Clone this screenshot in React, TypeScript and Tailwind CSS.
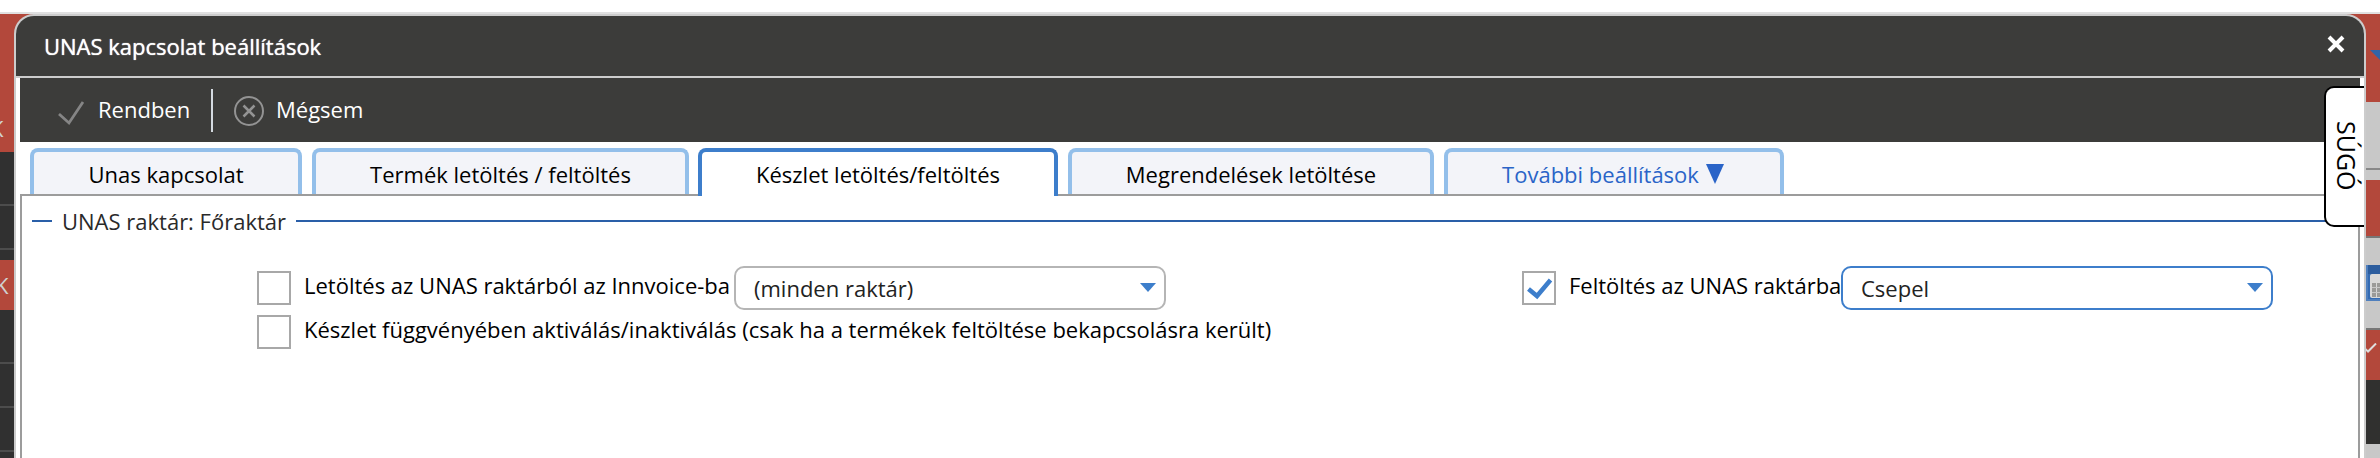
import type { ReactNode } from 'react';

interface TabProps {
  label: ReactNode;
  className: string;
  active?: boolean;
}

function Tab({ label, className, active }: TabProps) {
  return (
    <button
      className={`${className} flex items-start justify-center rounded-t-lg border-x-4 border-t-4 pt-[5px] leading-[35px] ${
        active ? 'h-12 border-[#3d7ecb] bg-white' : 'h-[46px] border-[#93bfea] bg-[#f3f4f9]'
      }`}
    >
      {label}
    </button>
  );
}

function Checkbox({ checked }: { checked?: boolean }) {
  return (
    <span className="flex h-[34px] w-[34px] shrink-0 items-center justify-center border-2 border-[#a8a8a8] bg-white">
      {checked && (
        <svg viewBox="0 0 30 30" className="h-[30px] w-[30px] shrink-0" fill="none" stroke="#3d7ecb" strokeWidth="4.500">
          <path d="M4.500 16L13 23L26.500 7" />
        </svg>
      )}
    </span>
  );
}

function Select({ value, className }: { value: string; className: string }) {
  return (
    <div className={`flex h-11 w-[432px] shrink-0 items-center justify-between rounded-[10px] border-2 bg-white pr-2 text-[#222] ${className}`}>
      <span>{value}</span>
      <svg viewBox="0 0 16 9" className="mb-px h-[9px] w-4" fill="#3d7ecb">
        <path d="M0 0H16L8 9Z" />
      </svg>
    </div>
  );
}

function Label({ children }: { children: ReactNode }) {
  return <span className="block shrink-0 whitespace-nowrap leading-[34px]">{children}</span>;
}

// slice of the main menu that sticks out on the left of the dialog
function LeftMenu() {
  return (
    <div className="flex h-full w-[14px] shrink-0 flex-col overflow-hidden bg-[#303030] text-[22px] text-[#d0d0d0]">
      <div className="h-[138px] shrink-0 bg-[#b3483b] pt-[97px] leading-[34px]">
        <span className="-ml-[10px]">K</span>
      </div>
      <div className="h-[54px] shrink-0 border-b-2 border-[#4c4c4c]" />
      <div className="h-11 shrink-0 border-b-2 border-[#4c4c4c]" />
      <div className="mt-2.5 h-[50px] shrink-0 bg-[#b3483b] leading-[50px]">
        <span className="-ml-[5px]">K</span>
      </div>
      <div className="h-[54px] shrink-0 border-b-2 border-[#4c4c4c]" />
      <div className="h-11 shrink-0 border-b-2 border-[#4c4c4c]" />
      <div className="h-11 shrink-0 border-b-2 border-[#4c4c4c]" />
    </div>
  );
}

function RightMenu() {
  return (
    <div className="flex h-full w-[14px] shrink-0 flex-col overflow-hidden bg-[#c8c8c8]">
      <div className="h-[88px] shrink-0 bg-[#b3483b] pl-1 pt-9">
        <svg viewBox="0 0 10 10" className="h-2.5 w-2.5" fill="#2f64a7">
          <path d="M0 0H10V10Z" />
        </svg>
      </div>
      <div className="h-[68px] shrink-0 border-b-2 border-[#888]" />
      <div className="mt-2.5 h-[56px] shrink-0 bg-[#b3483b]" />
      <div className="h-[94px] shrink-0 border-y-2 border-[#777] pt-[27px]">
        <svg viewBox="0 0 14 36" className="h-9 w-[14px]">
          <rect width="14" height="36" fill="#4f7fbd" />
          <rect x="2" width="12" height="34" fill="#346bb3" />
          <rect x="2" width="12" height="9" fill="#2c5d9e" />
          <rect x="4" y="9" width="12" height="24" rx="2" fill="#d8d8d8" />
          <path d="M6 18h4v14H6zM11 18h3v14h-3z" fill="#9a9a98" />
          <path d="M6 22.500h8M6 27.500h8" stroke="#c8c8c8" />
        </svg>
      </div>
      <div className="h-[50px] shrink-0 bg-[#b3483b] pt-[13px]">
        <svg viewBox="0 0 14 10" className="h-2.5 w-[14px]" fill="none" stroke="#dedede" strokeWidth="2">
          <path d="M-3 4L2 8.500L10 .5" />
        </svg>
      </div>
      <div className="h-16 shrink-0 bg-[#30302f]" />
    </div>
  );
}

export default function App() {
  return (
    <div
      className="flex h-[458px] w-[2380px] flex-col overflow-hidden bg-white text-[22px] text-black"
      style={{ fontFamily: '"Open Sans", "Noto Sans", sans-serif' }}
    >
      <div className="h-[14px] shrink-0 border-b-2 border-[#e0e0e0]" />
      <div className="flex h-[444px] bg-[#b3483b]">
        <LeftMenu />
        <div className="relative h-[480px] w-[2352px] shrink-0 overflow-hidden rounded-t-[20px] border-2 border-[#ccc] bg-white">
          <div className="flex h-[62px] items-center justify-between border-b-2 border-[#ccc] bg-[#3c3c3a] pl-7 pr-[19px] text-white">
            <h1 className="[text-shadow:0_0_1px_#fff]">UNAS kapcsolat beállítások</h1>
            <svg viewBox="0 0 18 18" className="mb-1 h-[18px] w-[18px]" fill="none" stroke="#fff" strokeWidth="4">
              <path d="M2 2L16 16M16 2L2 16" />
            </svg>
          </div>

          <div className="mx-1 flex h-16 items-center bg-[#3c3c3a] text-white">
            <svg viewBox="0 0 28 26" className="ml-[37px] mt-[5px] h-[26px] w-7" fill="none" stroke="#858585" strokeWidth="2.800">
              <path d="M2 14L12 23L26 2" />
            </svg>
            <span className="mb-0.5 ml-[13px] w-[92px]">Rendben</span>
            <span className="ml-[21px] h-[43px] w-0.5 bg-[#d4dae0]" />
            <svg viewBox="0 0 30 30" className="ml-[21px] mt-px h-[30px] w-[30px]" fill="none" stroke="#939393" strokeWidth="2">
              <circle cx="15" cy="15" r="14" />
              <path d="M9.500 9.500L20.500 20.500M20.500 9.500L9.500 20.500" strokeWidth="2.500" />
            </svg>
            <span className="mb-0.5 ml-3">Mégsem</span>
          </div>

          <div className="relative z-10 mt-1.5 flex h-[46px] items-start pl-[10px]">
            <Tab label="Unas kapcsolat" className="ml-1 w-[272px]" />
            <Tab label="Termék letöltés / feltöltés" className="ml-2.5 w-[377px]" />
            <Tab label="Készlet letöltés/feltöltés" className="ml-[9px] w-[360px]" active />
            <Tab label="Megrendelések letöltése" className="ml-2.5 w-[366px]" />
            <Tab
              label={
                <>
                  További beállítások
                  <svg viewBox="0 0 18 20" className="ml-[7px] mt-[7px] h-5 w-[18px]" fill="currentColor">
                    <path d="M0 0H18L9 20Z" />
                  </svg>
                </>
              }
              className="ml-2.5 w-[340px] pr-0.5 text-[#2a64c8]"
            />
          </div>

          <div className="mx-1 h-[300px] border-2 border-[#9c9c9c] pt-[7px]">
            <div className="flex h-9 items-center pl-2.5 pr-2 text-[#2a2a2a]">
              <span className="h-0.5 w-5 bg-[#2a5fa8]" />
              <span className="ml-2.5 w-[234px] whitespace-nowrap">UNAS raktár: Főraktár</span>
              <span className="h-0.5 flex-1 bg-[#2a5fa8]" />
            </div>

            <div className="mt-[27px] flex h-11 items-center pl-[235px]">
              <div className="flex w-[1265px] items-center">
                <Checkbox />
                <div className="ml-[13px] w-[430px] pb-1.5">
                  <Label>Letöltés az UNAS raktárból az Innvoice-ba</Label>
                </div>
                <Select value="(minden raktár)" className="border-[#b5b5b5] pl-[18px]" />
              </div>
              <Checkbox checked />
              <div className="ml-[13px] w-[272px] pb-1.5">
                <Label>Feltöltés az UNAS raktárba</Label>
              </div>
              <Select value="Csepel" className="border-[#3d7ecb] pl-[18px]" />
            </div>
            <div className="flex h-11 items-center pl-[235px]">
              <Checkbox />
              <div className="ml-[13px] pb-1.5">
                <Label>Készlet függvényében aktiválás/inaktiválás (csak ha a termékek feltöltése bekapcsolásra került)</Label>
              </div>
            </div>
          </div>

          {/* help drawer handle */}
          <div className="absolute right-0 top-[70px] z-20 flex h-[141px] w-10 items-center justify-center rounded-l-[10px] border-y-2 border-l-2 border-black bg-white">
            <span className="mb-0.5 ml-0.5 text-[25px] [writing-mode:vertical-rl]">SÚGÓ</span>
          </div>
        </div>
        <RightMenu />
      </div>
    </div>
  );
}
